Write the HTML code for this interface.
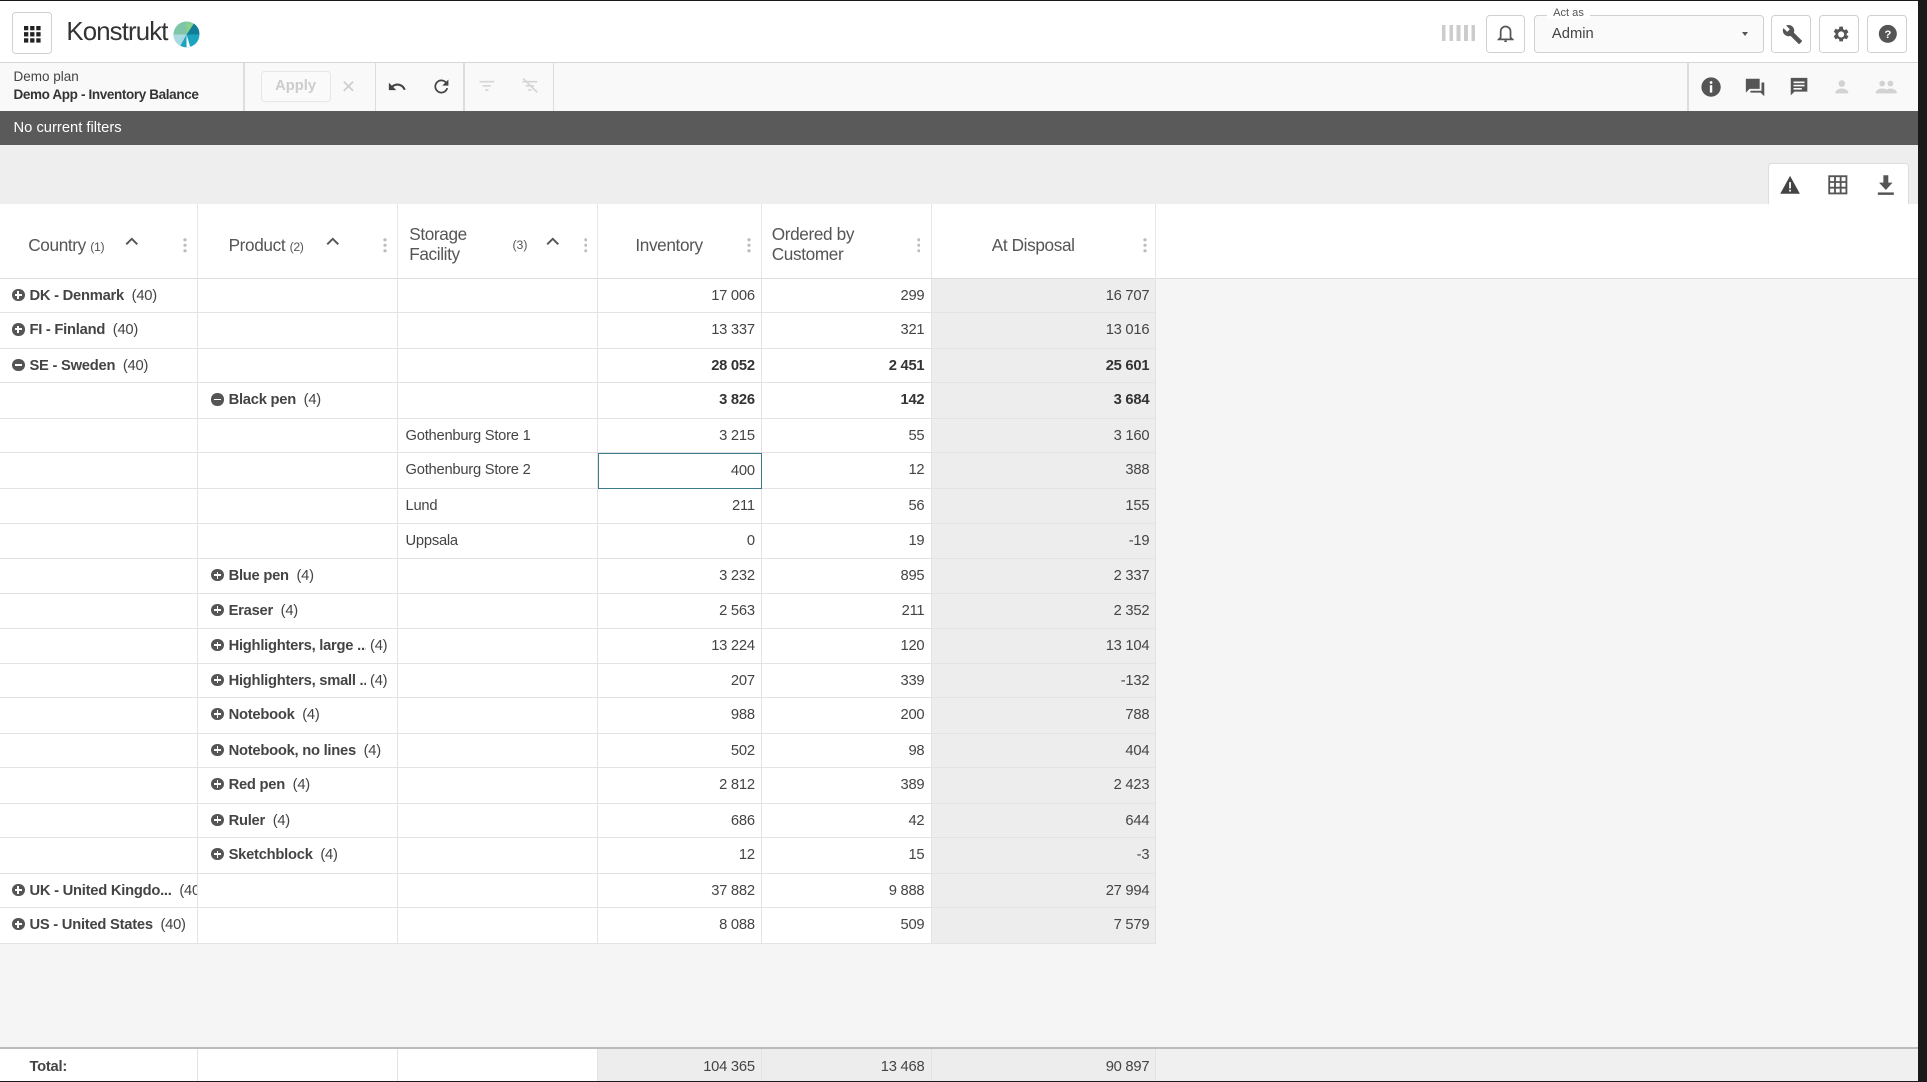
<!DOCTYPE html>
<html><head><meta charset="utf-8">
<style>
*{box-sizing:border-box;margin:0;padding:0}
html,body{width:1927px;height:1082px;overflow:hidden;background:#1a1a1a}
#z{zoom:1.22895;position:relative;width:1568px;height:880.5px;background:#1a1a1a;font-family:"Liberation Sans",sans-serif;color:#444}
.a{position:absolute}
#top{left:0;top:1px;width:1561px;height:50px;background:#fff;border-bottom:1px solid #d6d6d6}
.btn{position:absolute;border:1px solid #d0d0d0;border-radius:3px;background:#fafafa}
#tb{left:0;top:51px;width:1561px;height:39px;background:#f9f9f9}
#fb{left:0;top:90px;width:1561px;height:28px;background:#5a5a5a;color:#fff;font-size:12px;padding:8px 11px}
#gray{left:0;top:118px;width:1561px;height:48px;background:#eee}
#main{left:0;top:166px;width:1561px;height:686px;background:#f5f5f5}
#hdr{left:0;top:166px;width:1561px;height:61px;background:#fff;border-bottom:1px solid #ddd}
.h{position:absolute;top:166px;height:61px;border-right:1px solid #e6e6e6;font-size:14px;color:#555}
.dots{position:absolute;top:27px;width:3px;height:13px;background:radial-gradient(circle,#bbb 1.2px,transparent 1.4px) 0 0/3px 4.5px}
.c{position:absolute;border-right:1px solid #e3e3e3;border-bottom:1px solid #e3e3e3;font-size:12px;line-height:28px;background:#fff;white-space:nowrap;letter-spacing:-0.2px}
.n{text-align:right;padding-right:5px}
.d{background:#ededed}
b{color:#444}
.lb{display:inline-block;overflow:hidden;vertical-align:top}
.ic{display:inline-block;width:10px;height:10px;border-radius:50%;background:#555;position:relative;vertical-align:-1px;margin-right:4px}
.ic:before{content:"";position:absolute;left:2px;top:4.2px;width:6px;height:1.6px;background:#fff}
.ic.p:after{content:"";position:absolute;left:4.2px;top:2px;width:1.6px;height:6px;background:#fff}
.sa{position:absolute;top:27px}
#tot{left:0;top:852px;width:1561px;height:28px;background:#f0f0f0;border-top:2px solid #bbb}
</style></head><body><div id="z">
<div class="a" id="top">
 <div class="btn" style="left:10px;top:9px;width:32px;height:34px;background:#fff">
  <svg width="14" height="14" viewBox="0 0 14 14" style="position:absolute;left:9px;top:10px" fill="#222"><rect x="0" y="0" width="3.5" height="3.5"/><rect x="5" y="0" width="3.5" height="3.5"/><rect x="10" y="0" width="3.5" height="3.5"/><rect x="0" y="5" width="3.5" height="3.5"/><rect x="5" y="5" width="3.5" height="3.5"/><rect x="10" y="5" width="3.5" height="3.5"/><rect x="0" y="10" width="3.5" height="3.5"/><rect x="5" y="10" width="3.5" height="3.5"/><rect x="10" y="10" width="3.5" height="3.5"/></svg></div>
 <div class="a" style="left:54px;top:14px;font-size:21px;color:#333;letter-spacing:-0.7px">Konstrukt</div>
 <svg class="a" style="left:141px;top:16px" width="22" height="22" viewBox="0 0 22 22"><circle cx="11" cy="11" r="10.5" fill="#1ba3c0"/><path d="M11 11L11 0.5A10.5 10.5 0 0 0 0.5 11Z" fill="#7fc6a8"/><path d="M11 11L0.5 11A10.5 10.5 0 0 0 6 20.2Z" fill="#a9d9e3"/><path d="M11 11L17 2A10.5 10.5 0 0 1 21.5 11Z" fill="#117e98"/><path d="M11 11L11 .5 17 2Z" fill="#8cd08a"/><path d="M11 11L14 21 11 21.5Z" fill="#fff"/></svg>
 <div class="a" style="left:1173px;top:19px;width:28px;height:13px;background:repeating-linear-gradient(90deg,#ccc 0 3px,transparent 3px 6px)"></div>
 <div class="btn" style="left:1209px;top:11px;width:32px;height:31px;background:#fff"><svg width="14" height="16" style="position:absolute;left:8px;top:7px" viewBox="0 0 14 16" fill="none" stroke="#555" stroke-width="1.4"><path d="M3 11V6a4 4 0 0 1 8 0v5l1.5 1.5h-11Z"/><path d="M6 14h2"/></svg></div>
 <div class="btn" style="left:1248px;top:11px;width:187px;height:31px;background:#fafafa"><span class="a" style="left:10px;top:-7px;font-size:9px;background:#fff;padding:0 5px;color:#555">Act as</span><span class="a" style="left:14px;top:8px;font-size:12px;color:#444">Admin</span><span class="a" style="right:12px;top:13px;border:3px solid transparent;border-top:4px solid #555"></span></div>
 <div class="btn" style="left:1441px;top:11px;width:33px;height:31px;background:#fff"><svg class="a" style="left:8px;top:7px" width="17" height="17" viewBox="0 0 24 24" fill="#555"><path d="M22.7 19l-9.1-9.1c.9-2.3.4-5-1.5-6.9-2-2-5-2.4-7.4-1.3L9 6 6 9 1.6 4.7C.4 7.1.9 10.1 2.9 12.1c1.9 1.9 4.6 2.4 6.9 1.5l9.1 9.1c.4.4 1 .4 1.4 0l2.3-2.3c.5-.4.5-1.1.1-1.4z"/></svg></div>
 <div class="btn" style="left:1480px;top:11px;width:33px;height:31px;background:#fff"><svg class="a" style="left:8px;top:7px" width="17" height="17" viewBox="0 0 24 24" fill="#555"><path d="M19.1 12.9a7 7 0 0 0 0-1.8l2.1-1.6-2-3.5-2.5 1a7 7 0 0 0-1.6-.9L14.8 3h-4l-.4 2.6a7 7 0 0 0-1.6.9l-2.5-1-2 3.5 2.1 1.6a7 7 0 0 0 0 1.8l-2.1 1.6 2 3.5 2.5-1c.5.4 1 .7 1.6.9l.4 2.6h4l.4-2.6c.6-.2 1.1-.5 1.6-.9l2.5 1 2-3.5zM12.8 15.5a3.5 3.5 0 1 1 0-7 3.5 3.5 0 0 1 0 7z"/></svg></div>
 <div class="btn" style="left:1519px;top:11px;width:33px;height:31px;background:#fff"><svg class="a" style="left:8px;top:7px" width="16" height="16" viewBox="0 0 24 24"><circle cx="12" cy="12" r="11" fill="#555"/><text x="12" y="17" font-size="14" font-weight="bold" text-anchor="middle" fill="#fff" font-family="Liberation Sans">?</text></svg></div>
</div>
<div class="a" id="tb">
 <div class="a" style="left:11px;top:5px;font-size:11px;color:#444">Demo plan</div>
 <div class="a" style="left:11px;top:20px;font-size:11px;font-weight:bold;color:#333;letter-spacing:-0.3px">Demo App - Inventory Balance</div>
 <div class="a" style="left:198px;top:0;width:1px;height:39px;background:#ddd"></div>
 <div class="btn" style="left:212px;top:7px;width:57px;height:25px;border-color:#e6e6e6;color:#ccc;font-size:12px;font-weight:bold;text-align:center;line-height:23px">Apply</div>
 <div class="a" style="left:278px;top:8px;font-size:19px;color:#ccc">×</div>
 <div class="a" style="left:305px;top:0;width:1px;height:39px;background:#ddd"></div>
 <svg class="a" style="left:314px;top:12px" width="18" height="16" viewBox="0 0 24 24" fill="#444"><path d="M12.5 8c-2.6 0-5 1-6.9 2.6L2 7v9h9l-3.6-3.6c1.4-1.2 3.2-1.9 5.1-1.9 3.5 0 6.5 2.3 7.6 5.5l2.4-.8C21 11 17.1 8 12.5 8z"/></svg>
 <svg class="a" style="left:351px;top:11px" width="17" height="17" viewBox="0 0 24 24" fill="#444"><path d="M17.6 6.4A8 8 0 1 0 19.7 14h-2.1a6 6 0 1 1-1.4-6.2L13 11h7V4z"/></svg>
 <div class="a" style="left:377px;top:0;width:1px;height:39px;background:#ddd"></div>
 <svg class="a" style="left:388px;top:11px" width="16" height="16" viewBox="0 0 24 24" fill="#d5d5d5"><path d="M3 6h18v2H3zm4 5h10v2H7zm3 5h4v2h-4z"/></svg>
 <svg class="a" style="left:423px;top:11px" width="16" height="16" viewBox="0 0 24 24" fill="#d5d5d5"><path d="M3 6h18v2H3zm4 5h10v2H7zm3 5h4v2h-4z"/><path d="M4 3l17 17" stroke="#d5d5d5" stroke-width="2"/></svg>
 <div class="a" style="left:450px;top:0;width:1px;height:39px;background:#ddd"></div>
 <div class="a" style="left:1373px;top:0;width:1px;height:39px;background:#ddd"></div>
 <svg class="a" style="left:1383px;top:11px" width="18" height="18" viewBox="0 0 24 24"><circle cx="12" cy="12" r="10.5" fill="#555"/><rect x="10.7" y="10" width="2.6" height="8" fill="#fff"/><circle cx="12" cy="7" r="1.5" fill="#fff"/></svg>
 <svg class="a" style="left:1419px;top:11px" width="18" height="18" viewBox="0 0 24 24" fill="#555"><path d="M2 3h15v11H6l-4 4zM19 7h3v15l-4-4H7v-2h12z"/></svg>
 <svg class="a" style="left:1455px;top:11px" width="18" height="18" viewBox="0 0 24 24" fill="#555"><path d="M3 2h18v15H7l-4 4z"/><path d="M6 6h12v1.8H6zm0 3.5h12v1.8H6zm0 3.5h9v1.8H6z" fill="#f9f9f9"/></svg>
 <svg class="a" style="left:1491px;top:12px" width="16" height="16" viewBox="0 0 24 24" fill="#d2d2d2"><circle cx="12" cy="8" r="4"/><path d="M4 20c0-4 4-6 8-6s8 2 8 6z"/></svg>
 <svg class="a" style="left:1525px;top:12px" width="20" height="16" viewBox="0 0 30 24" fill="#d2d2d2"><circle cx="10" cy="8" r="3.5"/><circle cx="20" cy="8" r="3.5"/><path d="M2 20c0-4 4-6 8-6s8 2 8 6zM14 20c0-4 2-6 6-6s8 2 8 6z"/></svg>
</div>
<div class="a" id="fb">No current filters</div>
<div class="a" id="gray">
 <div class="a" style="left:1439px;top:15px;width:114px;height:34px;background:#fff;border:1px solid #ddd;border-bottom:none;border-radius:3px 3px 0 0">
  <svg class="a" style="left:8px;top:9px" width="18" height="16" viewBox="0 0 24 22" fill="#444"><path d="M12 1L1 21h22z"/><rect x="11" y="8" width="2" height="7" fill="#fff"/><rect x="11" y="16.5" width="2" height="2" fill="#fff"/></svg>
  <svg class="a" style="left:48px;top:9px" width="16" height="16" viewBox="0 0 16 16" fill="none" stroke="#555" stroke-width="1.5"><rect x="1" y="1" width="14" height="14"/><path d="M1 5.7h14M1 10.3h14M5.7 1v14M10.3 1v14"/></svg>
  <svg class="a" style="left:87px;top:8px" width="16" height="18" viewBox="0 0 16 18" fill="#555"><path d="M6 1h4v6h3.5L8 13 2.5 7H6z"/><rect x="1.5" y="15" width="13" height="2"/></svg>
 </div>
</div>
<div class="a" id="main"></div>
<div class="a" id="hdr"></div>
<div class="h" style="left:0;width:161px"><span class="a" style="left:23px;top:25px;letter-spacing:-0.3px">Country <span style="font-size:10px">(1)</span></span><svg class="sa" style="left:102px" width="11" height="7" viewBox="0 0 11 7"><path d="M1 6l4.5-4.5L10 6" fill="none" stroke="#555" stroke-width="1.6"/></svg><div class="dots" style="left:149px"></div></div>
<div class="h" style="left:161px;width:163px"><span class="a" style="left:25px;top:25px;letter-spacing:-0.3px">Product <span style="font-size:10px">(2)</span></span><svg class="sa" style="left:104px" width="11" height="7" viewBox="0 0 11 7"><path d="M1 6l4.5-4.5L10 6" fill="none" stroke="#555" stroke-width="1.6"/></svg><div class="dots" style="left:151px"></div></div>
<div class="h" style="left:324px;width:163px"><span class="a" style="left:9px;top:17px;line-height:16px;letter-spacing:-0.3px">Storage<br>Facility</span><span class="a" style="left:93px;top:28px;font-size:10px">(3)</span><svg class="sa" style="left:120px" width="11" height="7" viewBox="0 0 11 7"><path d="M1 6l4.5-4.5L10 6" fill="none" stroke="#555" stroke-width="1.6"/></svg><div class="dots" style="left:151px"></div></div>
<div class="h" style="left:487px;width:133px"><span class="a" style="left:30px;top:25px;letter-spacing:-0.3px">Inventory</span><div class="dots" style="left:121px"></div></div>
<div class="h" style="left:620px;width:138px"><span class="a" style="left:8px;top:17px;line-height:16px;letter-spacing:-0.3px">Ordered by<br>Customer</span><div class="dots" style="left:126px"></div></div>
<div class="h" style="left:758px;width:183px"><span class="a" style="left:49px;top:25px;letter-spacing:-0.3px">At Disposal</span><div class="dots" style="left:172px"></div></div>
<div id="rows"></div>
<div class="a" id="tot">
 <div class="c" style="left:0;top:0;width:161px;height:26px;border-bottom:none;font-weight:bold;padding-left:24px;line-height:30px">Total:</div>
 <div class="c" style="left:161px;top:0;width:163px;height:26px;border-bottom:none"></div>
 <div class="c" style="left:324px;top:0;width:163px;height:26px;border-bottom:none"></div>
 <div class="c n d" style="left:487px;top:0;width:133px;height:26px;border-bottom:none;line-height:30px">104 365</div>
 <div class="c n d" style="left:620px;top:0;width:138px;height:26px;border-bottom:none;line-height:30px">13 468</div>
 <div class="c n d" style="left:758px;top:0;width:183px;height:26px;border-bottom:none;line-height:30px">90 897</div>
</div>
<script>
var R=[
[0,'p','DK - Denmark','40','','17 006','299','16 707'],
[0,'p','FI - Finland','40','','13 337','321','13 016'],
[0,'m','SE - Sweden','40','','28 052','2 451','25 601',1],
[1,'m','Black pen','4','','3 826','142','3 684',1],
[2,'','','','Gothenburg Store 1','3 215','55','3 160'],
[2,'','','','Gothenburg Store 2','400','12','388',0,1],
[2,'','','','Lund','211','56','155'],
[2,'','','','Uppsala','0','19','-19'],
[1,'p','Blue pen','4','','3 232','895','2 337'],
[1,'p','Eraser','4','','2 563','211','2 352'],
[1,'p','Highlighters, large ...','4','','13 224','120','13 104',0,0,112],
[1,'p','Highlighters, small ...','4','','207','339','-132',0,0,112],
[1,'p','Notebook','4','','988','200','788'],
[1,'p','Notebook, no lines','4','','502','98','404'],
[1,'p','Red pen','4','','2 812','389','2 423'],
[1,'p','Ruler','4','','686','42','644'],
[1,'p','Sketchblock','4','','12','15','-3'],
[0,'p','UK - United Kingdo...','40','','37 882','9 888','27 994'],
[0,'p','US - United States','40','','8 088','509','7 579']];
var h='';
R.forEach(function(r,i){var t=227+Math.round(i*28.45),t2=227+Math.round((i+1)*28.45),hh=t2-t;
 var lab=r[2]?'<span class="ic '+r[1]+'"></span>'+(r[10]?'<b class="lb" style="width:'+r[10]+'px">'+r[2]+'</b> ('+r[3]+')':'<b>'+r[2]+'</b>&nbsp; ('+r[3]+')'):'';
 var bs=r[8]?'font-weight:bold;color:#333;':'';
 var s='top:'+t+'px;height:'+hh+'px;';
 h+='<div class="c" style="left:0;'+s+'width:161px;padding-left:10px;overflow:hidden">'+(r[0]==0?lab:'')+'</div>';
 h+='<div class="c" style="left:161px;'+s+'width:163px;padding-left:11px">'+(r[0]==1?lab:'')+'</div>';
 h+='<div class="c" style="left:324px;'+s+'width:163px;padding-left:6px">'+r[4]+'</div>';
 h+='<div class="c n" style="left:487px;'+s+'width:133px;'+bs+(r[9]?'border:1px solid #3d7a8a;':'')+'">'+r[5]+'</div>';
 h+='<div class="c n" style="left:620px;'+s+'width:138px;'+bs+'">'+r[6]+'</div>';
 h+='<div class="c n d" style="left:758px;'+s+'width:183px;'+bs+'">'+r[7]+'</div>';
});
document.getElementById('rows').innerHTML=h;
</script>
</div></body></html>
